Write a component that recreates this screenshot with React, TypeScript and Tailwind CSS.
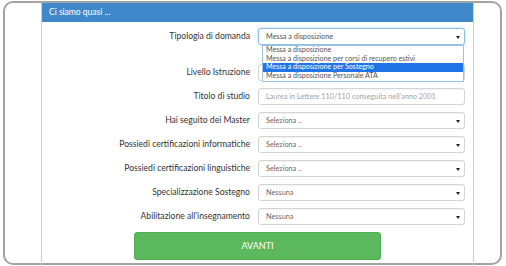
import React from 'react';

const rows: { label: string; value: string; kind: 'select' | 'input' }[] = [
  // this select sits under the opened dropdown, so its value is not visible
  { label: 'Livello Istruzione', value: '', kind: 'select' },
  { label: 'Titolo di studio', value: "Laurea in Lettere 110/110 conseguita nell'anno 2001", kind: 'input' },
  { label: 'Hai seguito dei Master', value: 'Seleziona ..', kind: 'select' },
  { label: 'Possiedi certificazioni informatiche', value: 'Seleziona ..', kind: 'select' },
  { label: 'Possiedi certificazioni linguistiche', value: 'Seleziona ..', kind: 'select' },
  { label: 'Specializzazione Sostegno', value: 'Nessuna', kind: 'select' },
  { label: "Abilitazione all'insegnamento", value: 'Nessuna', kind: 'select' },
];

const options = [
  'Messa a disposizione',
  'Messa a disposizione per corsi di recupero estivi',
  'Messa a disposizione per Sostegno',
  'Messa a disposizione Personale ATA',
];

function Caret() {
  return (
    <svg width="4" height="3" viewBox="0 0 4 3" className="absolute right-[4px] top-[7px]">
      <path d="M0 0 L4 0 L2 3 Z" fill="#222" />
    </svg>
  );
}

function Field({ value, kind }: { value: string; kind: 'select' | 'input' }) {
  return (
    <div className="relative h-[17px] w-[207px] rounded-[3px] border border-[#d4d4d4] bg-white pl-[7px] text-[7.3px] leading-[15px] shadow-[inset_0_1px_1px_rgba(0,0,0,0.05)]">
      <span className={kind === 'input' ? 'text-[#a3a3a3]' : 'text-[#6a6a6a]'}>{value}</span>
      {kind === 'select' && <Caret />}
    </div>
  );
}

export default function App() {
  return (
    <div className="h-[266px] w-[506px] overflow-hidden bg-white pl-[3px] pt-[1px]" style={{ fontFamily: 'Lato, "Open Sans", sans-serif' }}>
      {/* outer window frame */}
      <div className="h-[264px] w-[499px] rounded-[10px] border-2 border-[#a3a3a3]">
        {/* panel */}
        <div className="ml-[36px] h-[270px] w-[433px] border-x border-[#bcd6ee]">
          <div className="h-[19px] bg-[#3f89ca] pl-[7px] text-[8.5px] leading-[18px] text-white">Ci siamo quasi ...</div>

          <div className="flex flex-col gap-[7px] pt-[6px]">
            {/* first row, opened select */}
            <div className="mb-[12px] grid grid-cols-[208px_207px] items-center gap-x-[8px]">
              <div className="text-right text-[8.6px] text-[#333]">Tipologia di domanda</div>
              <div className="relative">
                <div className="relative h-[17px] w-[207px] rounded-[3px] border border-[#8fbde6] bg-white pl-[7px] text-[7.3px] leading-[15px] text-[#555] shadow-[0_0_3px_rgba(102,175,233,0.5)]">
                  Messa a disposizione
                  <Caret />
                </div>
                <div className="absolute left-[4px] right-[1px] top-full z-10 border border-[#9cc3e8] bg-white text-[7.1px] leading-[8.7px] text-[#555]">
                  {options.map((o, i) => (
                    <div key={o} className={i === 2 ? 'bg-[#1f75e6] pl-[3px] text-white' : 'pl-[3px]'}>
                      {o}
                    </div>
                  ))}
                </div>
              </div>
            </div>

            {rows.map((r) => (
              <div key={r.label} className="grid grid-cols-[208px_207px] items-center gap-x-[8px]">
                <div className="text-right text-[8.6px] text-[#333]">{r.label}</div>
                <Field value={r.value} kind={r.kind} />
              </div>
            ))}

            <button className="mx-auto h-[28px] w-[247px] rounded-[3px] border border-[#4cae4c] bg-[#5cb85c] text-[9px] text-white">
              AVANTI
            </button>
          </div>
        </div>
      </div>
    </div>
  );
}
